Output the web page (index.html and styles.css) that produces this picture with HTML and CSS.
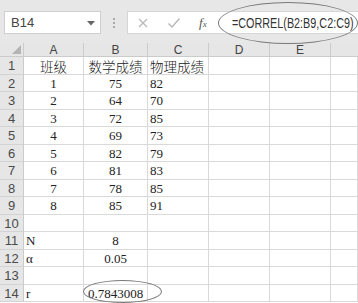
FILE: index.html
```html
<!DOCTYPE html>
<html lang="zh-CN">
<head>
    <meta charset="UTF-8">
    <title>CORREL</title>
    <link rel="stylesheet" href="styles.css">
</head>
<body>

    <div class="toolbar">
        <div class="namebox">
            <span>B14</span>
            <svg class="drop" width="8" height="5" viewBox="0 0 8 5"><path d="M0 0h8L4 4.5z" fill="#666"/></svg>
        </div>
        <div class="dots"><i></i><i></i><i></i></div>
        <div class="fbar">
            <svg class="ico" width="12" height="12" viewBox="0 0 12 12"><path d="M2 2l8 8M10 2l-8 8" stroke="#b9b9b9" stroke-width="1.3" fill="none"/></svg>
            <svg class="ico" width="14" height="12" viewBox="0 0 14 12"><path d="M1.5 6.5l3.5 3.5 7.5-8.5" stroke="#b9b9b9" stroke-width="1.5" fill="none"/></svg>
            <span class="fx">f<small>x</small></span>
            <span class="formula">=CORREL(B2:B9,C2:C9)</span>
        </div>
    </div>

    <div class="sheet">
        <div class="hd corner"><svg width="9" height="9" viewBox="0 0 9 9"><path d="M9 0v9H0z" fill="#b4b4b4"/></svg></div>
        <div class="hd">A</div>
        <div class="hd">B</div>
        <div class="hd">C</div>
        <div class="hd">D</div>
        <div class="hd">E</div>
        <div class="hd last"></div>
    </div>
    <div class="sheet" id="rows"></div>

    <!-- zaznaczenia -->
    <div class="ring ring-formula"></div>
    <div class="ring ring-result"></div>

    <script>
    // dane arkusza: [A, B, C]
    let data = [
        ['班级', '数学成绩', '物理成绩'],
        ['1', '75', '82'],
        ['2', '64', '70'],
        ['3', '72', '85'],
        ['4', '69', '73'],
        ['5', '82', '79'],
        ['6', '81', '83'],
        ['7', '78', '85'],
        ['8', '85', '91'],
        ['', '', ''],
        ['N', '8', ''],
        ['α', '0.05', ''],
        ['', '', ''],
        ['r', '0.7843008', '']
    ];

    let rows = document.getElementById('rows');
    data.forEach((row, i) => {
        let html = `<div class="rh">${i + 1}</div>`;
        let aClass = (i >= 10) ? 'cell left' : 'cell center';
        if (i === 0) aClass += ' cjk';
        html += `<div class="${aClass}">${row[0]}</div>`;
        html += `<div class="cell center${i === 0 ? ' cjk' : ''}">${row[1]}</div>`;
        html += `<div class="cell left${i === 0 ? ' cjk' : ''}">${row[2]}</div>`;
        html += `<div class="cell"></div><div class="cell"></div><div class="cell last"></div>`;
        rows.innerHTML += html;
    });
    </script>

</body>
</html>
```

FILE: styles.css
```css
html, body {
    margin: 0;
    height: 100%;
}

body {
    position: relative;
    width: 358px;
    height: 303px;
    overflow: hidden;
    background-color: white;
    font-family: "Liberation Sans", Arial, sans-serif;
    color: #333;
}

.toolbar {
    height: 43px;
    background-color: #e7e7e7;
    display: flex;
    align-items: flex-start;
    padding-top: 11px;
    box-sizing: border-box;
}

.namebox {
    flex-shrink: 0;
    margin-left: 4px;
    width: 97px;
    height: 23px;
    box-sizing: border-box;
    background: white;
    border: 1px solid #cfcfcf;
    display: flex;
    align-items: center;
    justify-content: space-between;
    padding: 0 5px 0 6px;
    font-size: 13px;
    color: #444;
}

.drop {
    margin-top: 1px;
}

.dots {
    flex-shrink: 0;
    width: 26px;
    height: 23px;
    display: flex;
    flex-direction: column;
    align-items: center;
    justify-content: center;
    gap: 2px;
}

.dots i {
    width: 2px;
    height: 2px;
    background: #a9a9a9;
}

.fbar {
    flex: 1;
    min-width: 0;
    height: 23px;
    box-sizing: border-box;
    background: white;
    border: 1px solid #d6d6d6;
    border-right: none;
    display: flex;
    align-items: center;
    padding-left: 9px;
}

.ico {
    flex-shrink: 0;
    margin-right: 18px;
}

.ico + .ico {
    margin-right: 18px;
}

.fx {
    font-family: "Liberation Serif", serif;
    font-style: italic;
    font-size: 13px;
    color: #555;
    margin-right: 25px;
}

.fx small {
    font-size: 9px;
}

.formula {
    display: inline-block;
    font-size: 15px;
    color: #333;
    transform: scaleX(0.72);
    transform-origin: left center;
    white-space: nowrap;
}

.sheet {
    display: grid;
    grid-template-columns: 24px 60px 64px 61px 61px 61px 1fr;
}

#rows {
    grid-auto-rows: 17.5px;
}

.hd {
    height: 14px;
    background: #e6e6e6;
    border-right: 1px solid #cbcbcb;
    border-bottom: 1px solid #cbcbcb;
    box-sizing: border-box;
    font-size: 12px;
    line-height: 14px;
    text-align: center;
    color: #444;
}

.corner {
    display: flex;
    justify-content: flex-end;
    align-items: flex-end;
    padding: 0 2px 2px 0;
}

.last {
    border-right: none;
}

.rh {
    background: #e6e6e6;
    border-right: 1px solid #cbcbcb;
    border-bottom: 1px solid #d3d3d3;
    box-sizing: border-box;
    font-size: 13px;
    color: #4a4a4a;
    text-align: center;
    line-height: 17px;
}

.cell {
    border-right: 1px solid #d9d9d9;
    border-bottom: 1px solid #d9d9d9;
    box-sizing: border-box;
    font-family: "Liberation Serif", "Times New Roman", serif;
    font-size: 13px;
    line-height: 17px;
    color: #222;
    white-space: nowrap;
}

.center {
    text-align: center;
}

.left {
    text-align: left;
    padding-left: 2px;
}

.cjk {
    font-family: "Noto Sans CJK SC", sans-serif;
    font-size: 13.5px;
    font-weight: 300;
    line-height: 15px;
    padding-top: 2px;
}

.ring {
    position: absolute;
    border: 1px solid #7a7a7a;
    border-radius: 50%;
}

.ring-formula {
    left: 218px;
    top: 2px;
    width: 138px;
    height: 40px;
}

.ring-result {
    left: 83px;
    top: 280px;
    width: 77px;
    height: 21px;
}
```
